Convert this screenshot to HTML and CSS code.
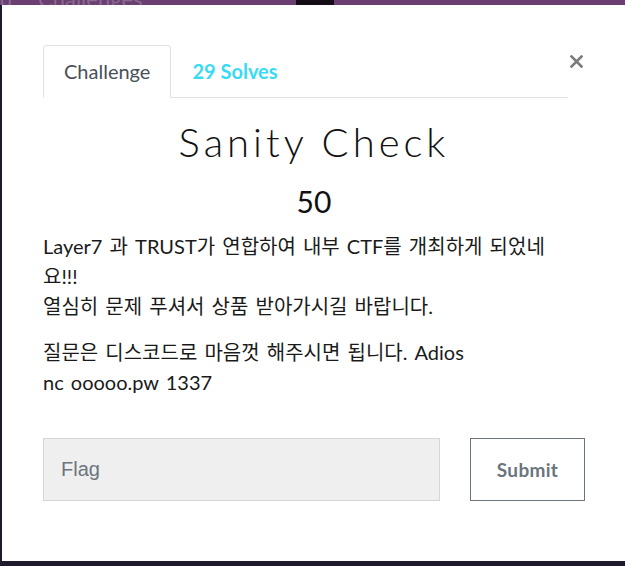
FILE: index.html
```html
<!DOCTYPE html>
<html lang="ko">
<head>
    <meta charset="UTF-8">
    <meta name="viewport" content="width=device-width, initial-scale=1.0">
    <title>Sanity Check</title>
    <link rel="stylesheet" href="styles.css">
</head>
<body>
    <div class="backdrop-top">
        <span class="crumb">d</span>
        <span class="crumb-title">Challenges</span>
        <span class="dark-block"></span>
    </div>
    <div class="modal">
        <div class="modal-header">
            <ul class="nav-tabs">
                <li class="tab active">Challenge</li>
                <li class="tab solves">29 Solves</li>
            </ul>
            <button class="close" aria-label="Close">
                <svg width="13" height="13" viewBox="0 0 13 13">
                    <path d="M1.5 1.5 L11.5 11.5 M11.5 1.5 L1.5 11.5" stroke="#7b7b7b" stroke-width="2.6" stroke-linecap="square" fill="none"/>
                </svg>
            </button>
        </div>
        <h2 class="challenge-name">Sanity Check</h2>
        <h3 class="challenge-value">50</h3>
        <div class="challenge-desc">
            <p>Layer7 과 TRUST가 연합하여 내부 CTF를 개최하게 되었네요!!!<br>열심히 문제 푸셔서 상품 받아가시길 바랍니다.</p>
            <p>질문은 디스코드로 마음껏 해주시면 됩니다. Adios<br>nc ooooo.pw 1337</p>
        </div>
        <div class="flag-form">
            <input class="flag-input" type="text" placeholder="Flag">
            <button class="submit">Submit</button>
        </div>
    </div>
</body>
</html>
```

FILE: styles.css
```css
body {
    margin: 0;
    background-color: #1e1a2b;
    font-family: "Lato", "Noto Sans CJK KR", sans-serif;
    overflow: hidden;
}
.backdrop-top {
    height: 5px;
    overflow: hidden;
    background-color: #6b3f72;
    display: flex;
    align-items: flex-end;
    font-size: 22px;
    line-height: 12px;
    color: rgba(255, 255, 255, 0.22);
}
.crumb {
    width: 38px;
}
.crumb-title {
    width: 258px;
}
.dark-block {
    width: 38px;
    height: 5px;
    background-color: #140d16;
}
.modal {
    margin-left: 2px;
    width: 623px;
    height: 556px;
    box-sizing: border-box;
    padding: 40px 40px 0 41px;
    background-color: #fff;
    color: #212529;
}
.modal-header {
    display: flex;
}
.nav-tabs {
    flex: 1;
    display: flex;
    list-style: none;
    margin: 0;
    padding: 0;
    border-bottom: 1px solid #dee2e6;
}
.tab {
    padding: 12px 20px;
    font-size: 20px;
    line-height: 27px;
    border: 1px solid transparent;
    border-radius: 4px 4px 0 0;
    margin-bottom: -1px;
}
.tab.active {
    color: #495057;
    border-color: #dee2e6 #dee2e6 #fff;
}
.tab.solves {
    color: #38dbf3;
    font-weight: 700;
}
.close {
    align-self: flex-start;
    margin-top: 10px;
    width: 17px;
    padding: 0 2px;
    border: none;
    background: none;
    line-height: 0;
}
.challenge-name {
    margin: 20px 0 0;
    text-align: center;
    font-size: 40px;
    font-weight: 300;
    line-height: 48px;
    letter-spacing: 4px;
    color: #111;
}
.challenge-value {
    margin: 17px 0 0;
    text-align: center;
    font-size: 30px;
    font-weight: 400;
    line-height: 36px;
    color: #111;
}
.challenge-desc {
    max-width: 518px;
    margin-top: 12px;
    font-size: 20px;
    line-height: 30px;
    word-spacing: 2px;
    color: #1a1a1a;
}
.challenge-desc p {
    margin: 0 0 16px;
}
.flag-form {
    display: flex;
    gap: 30px;
    margin-top: 41px;
}
.flag-input {
    flex: 1;
    height: 63px;
    box-sizing: border-box;
    padding: 0 17px;
    border: 1px solid #d6d6d6;
    background-color: #efefef;
    font-family: "Liberation Sans", sans-serif;
    font-size: 20px;
    color: #495057;
}
.flag-input::placeholder {
    color: #6c757d;
}
.submit {
    width: 115px;
    height: 63px;
    border: 1px solid #6c757d;
    background-color: #fff;
    color: #6c757d;
    font-family: "Lato", sans-serif;
    font-size: 19px;
    font-weight: 700;
    letter-spacing: 0.3px;
}
```
